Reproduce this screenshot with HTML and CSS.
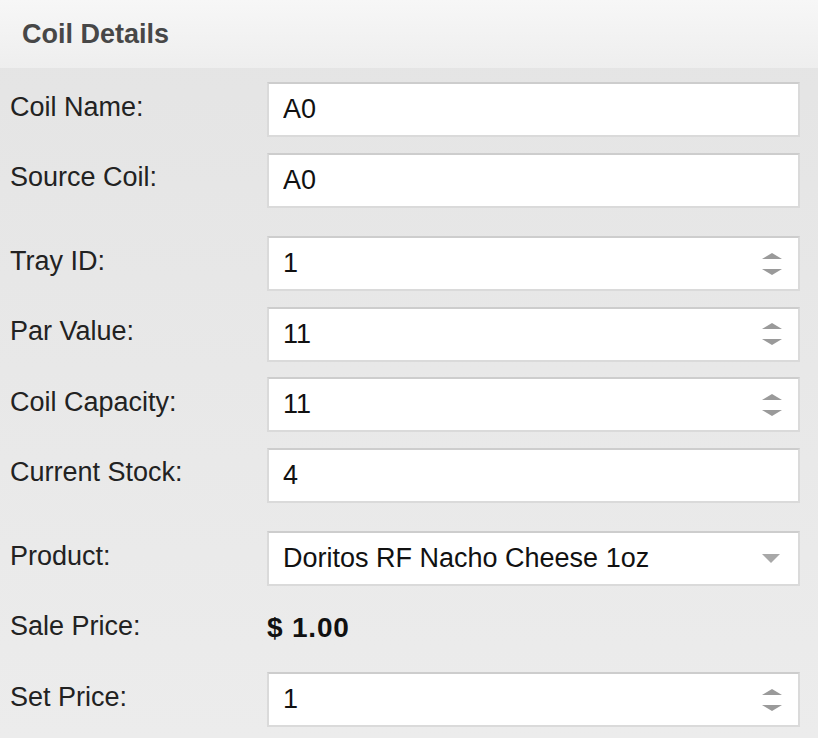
FILE: index.html
```html
<!DOCTYPE html>
<html lang="en">
<head>
  <meta charset="UTF-8">
  <meta name="viewport" content="width=device-width, initial-scale=1.0">
  <title>Coil Details</title>
  <link rel="stylesheet" href="styles.css">
</head>
<body>
  <div class="panel">
    <div class="panel-header">Coil Details</div>
    <div class="panel-body">

      <div class="group">
        <div class="row">
          <label class="label" for="coilName">Coil Name:</label>
          <div class="field"><input type="text" id="coilName" value="A0"></div>
        </div>
        <div class="row">
          <label class="label" for="sourceCoil">Source Coil:</label>
          <div class="field"><input type="text" id="sourceCoil" value="A0"></div>
        </div>
      </div>

      <div class="group">
        <div class="row">
          <label class="label" for="trayId">Tray ID:</label>
          <div class="field">
            <input type="text" id="trayId" value="1">
            <svg class="spin" width="20" height="22" viewBox="0 0 20 22"><path d="M10 0 L20 6 L0 6 Z M0 16 L20 16 L10 22 Z" fill="#9a9a9a"/></svg>
          </div>
        </div>
        <div class="row">
          <label class="label" for="parValue">Par Value:</label>
          <div class="field">
            <input type="text" id="parValue" value="11">
            <svg class="spin" width="20" height="22" viewBox="0 0 20 22"><path d="M10 0 L20 6 L0 6 Z M0 16 L20 16 L10 22 Z" fill="#9a9a9a"/></svg>
          </div>
        </div>
        <div class="row">
          <label class="label" for="coilCapacity">Coil Capacity:</label>
          <div class="field">
            <input type="text" id="coilCapacity" value="11">
            <svg class="spin" width="20" height="22" viewBox="0 0 20 22"><path d="M10 0 L20 6 L0 6 Z M0 16 L20 16 L10 22 Z" fill="#9a9a9a"/></svg>
          </div>
        </div>
        <div class="row">
          <label class="label" for="currentStock">Current Stock:</label>
          <div class="field"><input type="text" id="currentStock" value="4"></div>
        </div>
      </div>

      <div class="group">
        <div class="row">
          <label class="label">Product:</label>
          <div class="field select">
            <span class="value">Doritos RF Nacho Cheese 1oz</span>
            <svg class="caret" width="18" height="9" viewBox="0 0 18 9"><path d="M0 0 L18 0 L9 9 Z" fill="#a8a8a8"/></svg>
          </div>
        </div>
        <div class="row">
          <span class="label">Sale Price:</span>
          <span class="price">$ 1.00</span>
        </div>
        <div class="row">
          <label class="label" for="setPrice">Set Price:</label>
          <div class="field">
            <input type="text" id="setPrice" value="1">
            <svg class="spin" width="20" height="22" viewBox="0 0 20 22"><path d="M10 0 L20 6 L0 6 Z M0 16 L20 16 L10 22 Z" fill="#9a9a9a"/></svg>
          </div>
        </div>
      </div>

    </div>
  </div>
</body>
</html>
```

FILE: styles.css
```css
body {
  margin: 0;
  padding: 0;
  font-family: "Liberation Sans", Arial, Helvetica, sans-serif;
  background: #e6e6e6;
}
.panel {
  width: 818px;
  height: 738px;
  overflow: hidden;
  background: linear-gradient(#e4e4e4, #ececec);
}
.panel-header {
  height: 68px;
  box-sizing: border-box;
  padding: 0 22px;
  display: flex;
  align-items: center;
  font-size: 27px;
  font-weight: bold;
  color: #474747;
  background: linear-gradient(#f7f7f7, #eeeeee);
}
.panel-body {
  padding: 14px 18px 0 10px;
  display: flex;
  flex-direction: column;
  gap: 28.5px;
}
.group {
  display: flex;
  flex-direction: column;
  gap: 15.5px;
}
.row {
  display: flex;
  align-items: center;
  height: 55px;
}
.label {
  width: 257px;
  flex-shrink: 0;
  font-size: 27px;
  color: #222;
  padding-bottom: 5px;
}
.field {
  flex: 1;
  height: 55px;
  box-sizing: border-box;
  display: flex;
  align-items: center;
  background: #fff;
  border: 2px solid #dadada;
  border-top-color: #cdcdcd;
  padding: 0 16px 0 14px;
}
.field input {
  flex: 1;
  min-width: 0;
  border: none;
  outline: none;
  padding: 0;
  margin: 0;
  background: transparent;
  font-family: inherit;
  font-size: 27px;
  color: #111;
  height: 100%;
}
.spin {
  flex-shrink: 0;
}
.select .value {
  flex: 1;
  font-size: 27px;
  color: #111;
}
.caret {
  flex-shrink: 0;
  margin-right: 2px;
}
.price {
  font-size: 28px;
  font-weight: bold;
  letter-spacing: 0.8px;
  color: #111;
  padding-bottom: 2px;
}
```
